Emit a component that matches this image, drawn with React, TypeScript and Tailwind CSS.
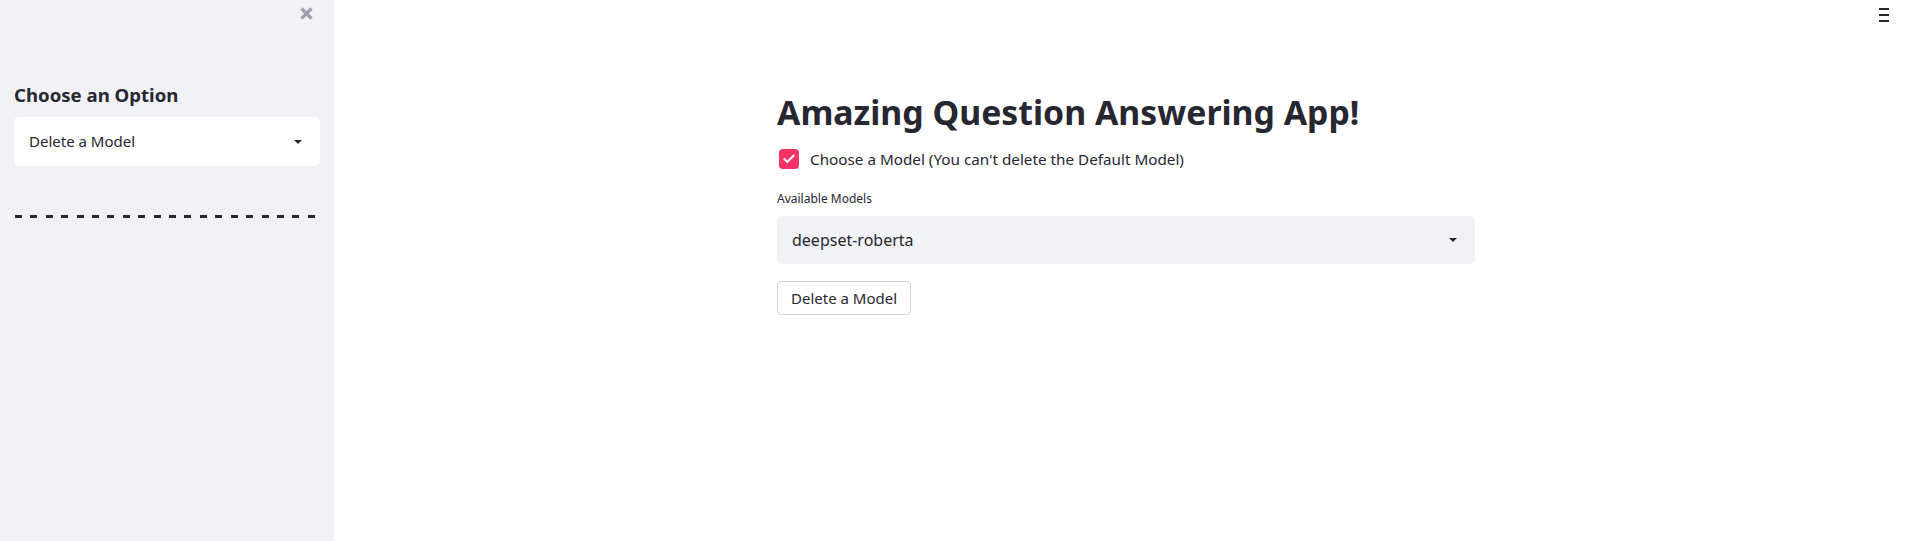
import { Check } from "lucide-react";

const font = { fontFamily: '"Noto Sans", "Liberation Sans", sans-serif' };

const Caret = () => (
    <svg width="8" height="4" viewBox="0 0 8 4" className="shrink-0">
        <path d="M0 0h8L4 4z" fill="#262730" />
    </svg>
);

const Sidebar = () => (
    <aside className="w-[334px] shrink-0 bg-[#f0f2f6] min-h-[541px] px-[14px] flex flex-col">
        <div className="flex justify-end pt-[7px] pr-[7px] h-[20px]">
            <svg width="13" height="13" viewBox="0 0 13 13">
                <path d="M1.5 1.5l10 10M11.5 1.5l-10 10" stroke="#9ea2ac" strokeWidth="3.2" />
            </svg>
        </div>
        <h3 className="mt-[63px] text-[18.6px] font-bold text-[#262730] leading-[24px]">Choose an Option</h3>
        <div className="mt-[10px] h-[49px] bg-white rounded-[5px] flex items-center justify-between pl-[15px] pr-[18px]">
            <span className="text-[15px] text-[#262730]">Delete a Model</span>
            <Caret />
        </div>
        <div className="mt-[49px] flex justify-between w-[300px] ml-px">
            {Array.from({ length: 20 }).map((_, i) => (
                <span key={i} className="w-[7px] h-[3px] bg-[#262730]" />
            ))}
        </div>
    </aside>
);

const Main = () => (
    <main className="flex-1 relative flex justify-center">
        <div className="absolute top-[8px] right-[22px] flex flex-col gap-[4px] w-[10px]">
            <span className="h-[2px] bg-[#262730]" />
            <span className="h-[2px] bg-[#262730]" />
            <span className="h-[2px] bg-[#262730]" />
        </div>
        <div className="w-[698px] ml-[7px] pt-[91px] flex flex-col">
            <h1 className="text-[33.8px] font-bold text-[#262730] leading-[42px]">Amazing Question Answering App!</h1>
            <label className="mt-[15px] flex items-center gap-[11px]">
                <span className="w-[20px] h-[20px] ml-[2px] rounded-[4px] bg-[#f63366] flex items-center justify-center">
                    <Check size={14} strokeWidth={3.5} className="text-white" />
                </span>
                <span className="text-[15.25px] text-[#262730]">Choose a Model (You can't delete the Default Model)</span>
            </label>
            <p className="mt-[20px] text-[12px] text-[#262730] leading-[16px]">Available Models</p>
            <div className="mt-[9px] h-[48px] bg-[#f0f2f6] rounded-[5px] flex items-center justify-between pl-[15px] pr-[18px]">
                <span className="text-[16px] text-[#262730]">deepset-roberta</span>
                <Caret />
            </div>
            <button className="mt-[17px] self-start h-[34px] px-[13px] border border-[#d4d6db] rounded-[4px] bg-white text-[15px] text-[#262730]">
                Delete a Model
            </button>
        </div>
    </main>
);

export default function App() {
    return (
        <div className="flex w-full min-h-[541px] bg-white" style={font}>
            <Sidebar />
            <Main />
        </div>
    );
}
